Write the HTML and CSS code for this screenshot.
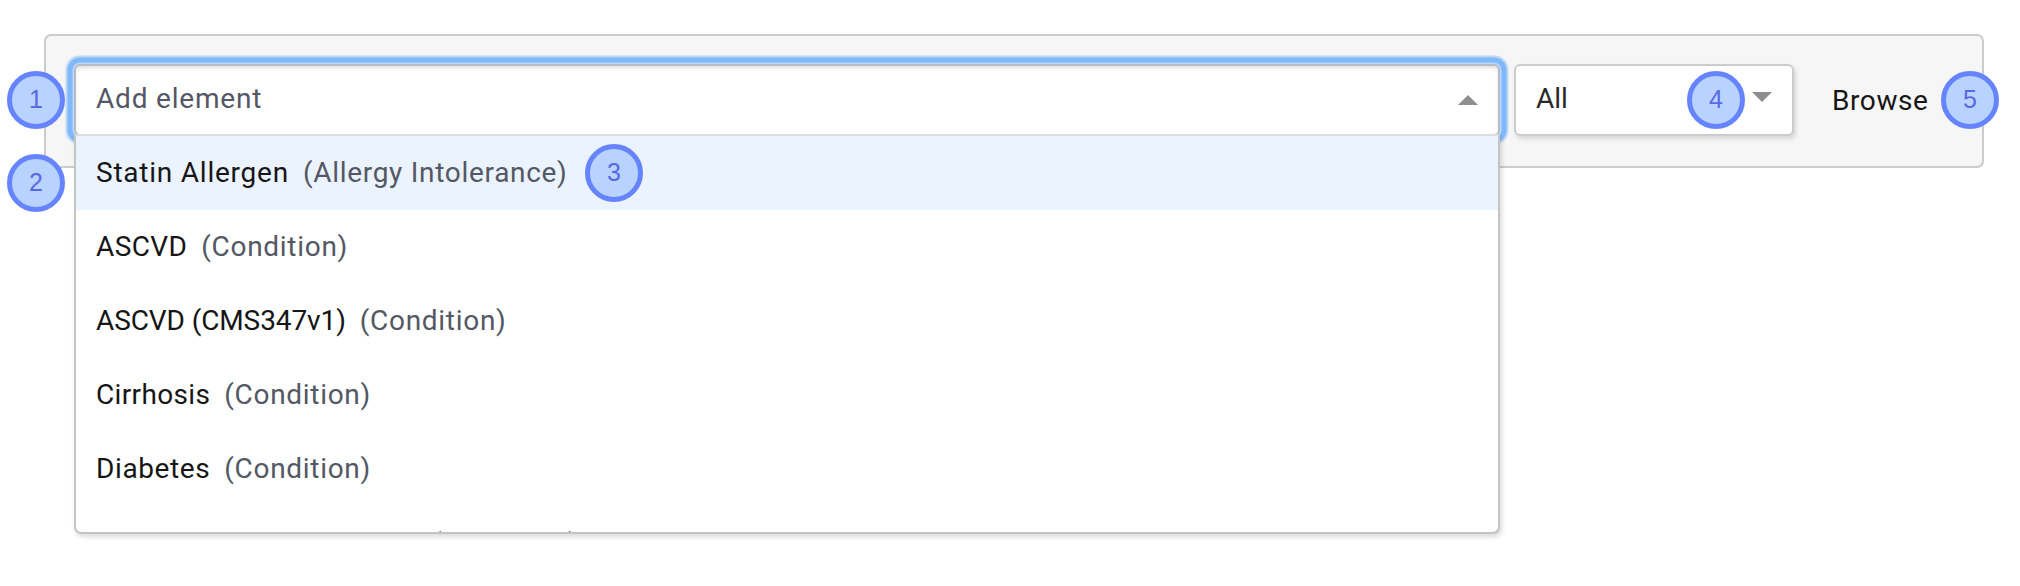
FILE: index.html
```html
<!DOCTYPE html>
<html lang="en">
<head>
<meta charset="utf-8">
<title>Add element</title>
<link rel="stylesheet" href="styles.css">
</head>
<body>
<main class="page">
  <section class="panel">
    <div class="combo">
      <div class="field field-focused">
        <span class="placeholder">Add element</span>
        <svg class="arrow" width="20" height="10" viewBox="0 0 20 10"><path d="M0 10 10 0 20 10z"/></svg>
      </div>
      <ul class="menu">
        <li class="option option-active"><span class="name statin">Statin Allergen</span><span class="type">(Allergy Intolerance)</span></li>
        <li class="option"><span class="name ascvd">ASCVD</span><span class="type">(Condition)</span></li>
        <li class="option"><span class="name cms">ASCVD (CMS347v1)</span><span class="type">(Condition)</span></li>
        <li class="option"><span class="name cirrhosis">Cirrhosis</span><span class="type">(Condition)</span></li>
        <li class="option"><span class="name">Diabetes</span><span class="type">(Condition)</span></li>
        <li class="option option-last"><span class="name">End Stage Renal Disease</span><span class="type">(Condition)</span></li>
      </ul>
    </div>
    <div class="field field-select">
      <span class="value">All</span>
      <svg class="arrow arrow-down" width="20" height="10" viewBox="0 0 20 10"><path d="M0 0H20L10 10z"/></svg>
    </div>
    <span class="browse">Browse</span>
  </section>
  <span class="marker m1">1</span>
  <span class="marker m2">2</span>
  <span class="marker m3">3</span>
  <span class="marker m4">4</span>
  <span class="marker m5">5</span>
</main>
</body>
</html>
```
FILE: styles.css
```css
* { box-sizing: border-box; }

body {
  margin: 0;
  background: #fff;
  color: #161616;
  font: 28px/1.2 Roboto, "Liberation Sans", sans-serif;
}

.page {
  position: relative;
  height: 586px;
  padding: 34px 36px 0 44px;
  overflow: hidden;
}

.panel {
  display: flex;
  align-items: flex-start;
  height: 134px;
  padding: 28px;
  border: 2px solid #ccc;
  border-radius: 7px;
  background: #f6f6f6;
}

.combo {
  position: relative;
  width: 1426px;
}

.field {
  display: flex;
  align-items: center;
  justify-content: space-between;
  height: 72px;
  padding: 0 20px 3px;
  border: 2px solid #ccc;
  border-radius: 6px;
  background: #fff;
}

.field-focused {
  border-color: #b8bcc6;
  box-shadow: 0 0 0 1.5px #b9d8fa, 0 0 0 6.5px #80b8fc, 0 0 0 8.5px #bfd8f3, inset 0 3px 4px -1px #ddd;
}

.field-select {
  width: 280px;
  margin-left: 14px;
  color: #292929;
  box-shadow: 2px 3px 4px rgba(0, 0, 0, .12);
}

.placeholder { color: #535864; letter-spacing: .8px; }
.value { letter-spacing: 0; }

.arrow { fill: #8e8e8e; margin-top: 2px; }
.arrow-down { margin-top: -3px; }

.browse {
  margin-left: 38px;
  line-height: 74px;
  letter-spacing: .6px;
}

.menu {
  position: absolute;
  top: 70px;
  left: 0;
  width: 1426px;
  height: 400px;
  margin: 0;
  padding: 0;
  overflow: hidden;
  list-style: none;
  border: 2px solid #c4c4c4;
  border-top-color: #dedede;
  border-radius: 0 0 7px 7px;
  background: #fff;
  box-shadow: 2px 3px 5px rgba(0, 0, 0, .14);
}

.option {
  display: flex;
  gap: 14px;
  height: 74px;
  padding-left: 20px;
  line-height: 73px;
  white-space: nowrap;
}

.option-active { background: #ebf3ff; }
.option-last { line-height: 75px; }

.type { color: #535864; letter-spacing: .7px; }
.name { letter-spacing: .6px; }
.statin { letter-spacing: .77px; }
.ascvd { letter-spacing: .4px; }
.cms { letter-spacing: -.1px; }
.cirrhosis { letter-spacing: .35px; }

.marker {
  position: absolute;
  width: 58px;
  height: 58px;
  border: 5px solid #6684ff;
  border-radius: 50%;
  background: #b8d3ff;
  color: #5a68e4;
  font: 25px/47px "Liberation Sans", Arial, sans-serif;
  text-align: center;
}

.m1 { left: 7px; top: 71px; }
.m2 { left: 7px; top: 154px; }
.m3 { left: 585px; top: 144px; }
.m4 { left: 1687px; top: 71px; }
.m5 { left: 1941px; top: 71px; }
```
